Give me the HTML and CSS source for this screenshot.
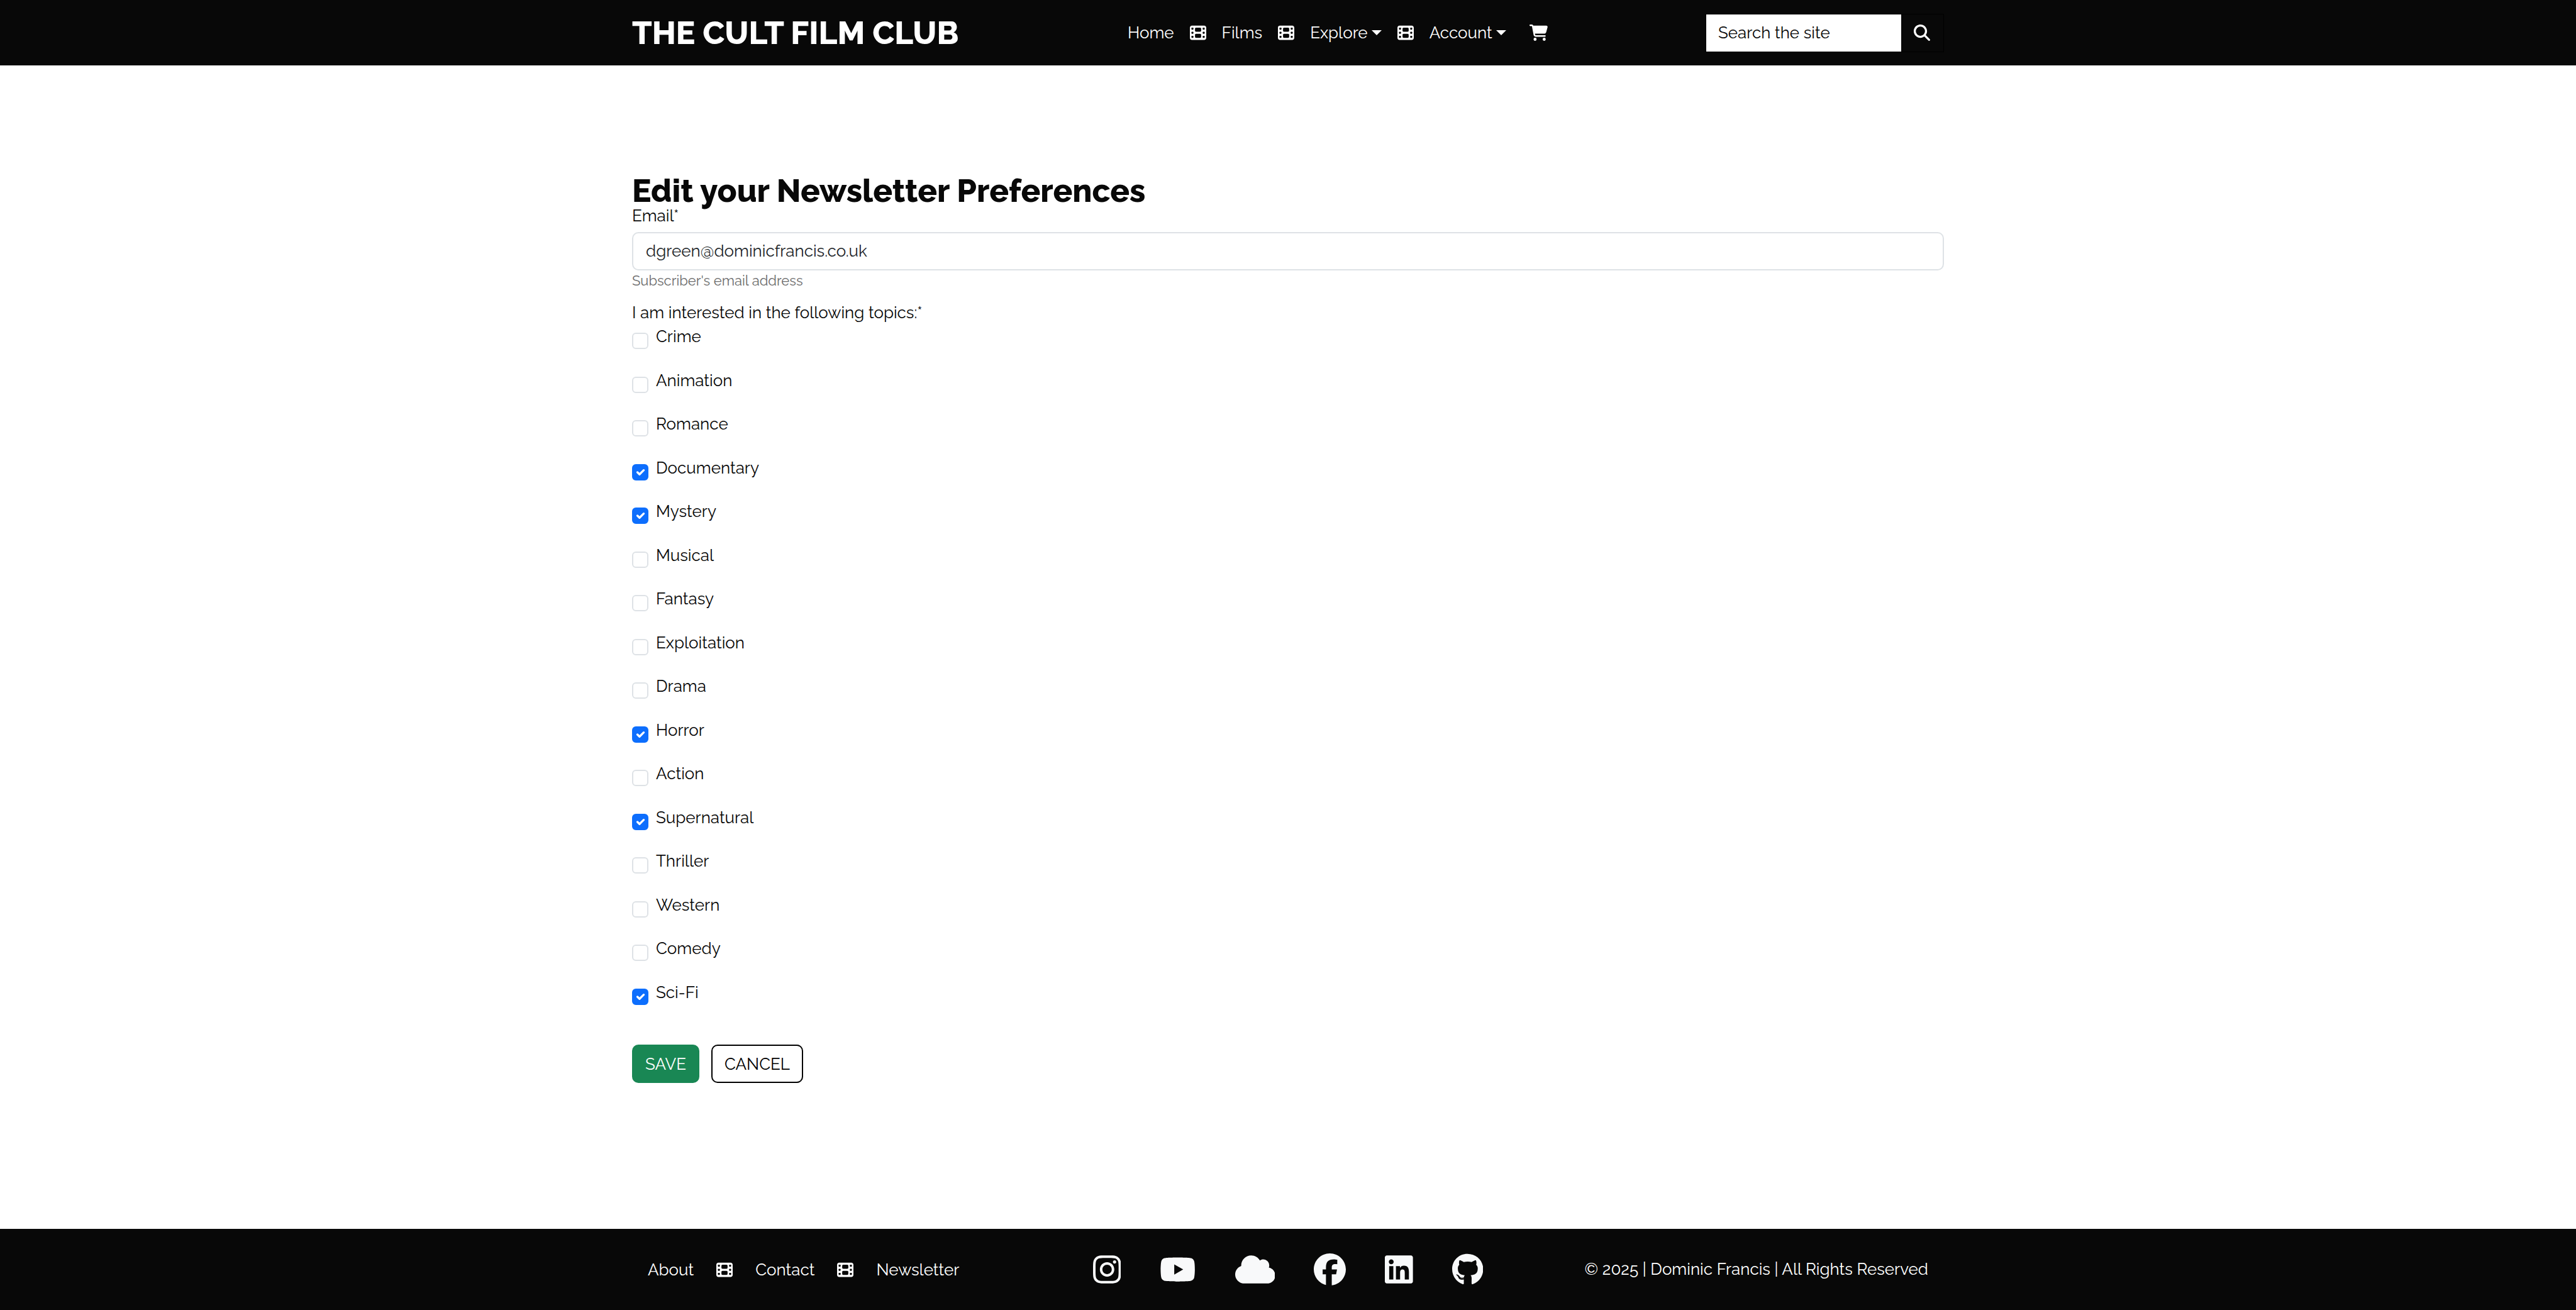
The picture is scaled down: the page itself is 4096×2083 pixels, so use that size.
FILE: index.html
```html
<!DOCTYPE html>
<html lang="en">
<head>
<meta charset="utf-8">
<meta name="viewport" content="width=device-width, initial-scale=1">
<title>The Cult Film Club</title>
<link rel="stylesheet" href="styles.css">
</head>
<body>
<svg class="sprite" aria-hidden="true">
  <symbol id="film" viewBox="0 0 512 512"><path d="M0 96C0 60.7 28.7 32 64 32l384 0c35.3 0 64 28.7 64 64l0 320c0 35.3-28.7 64-64 64L64 480c-35.3 0-64-28.7-64-64L0 96zM48 368l0 32c0 8.8 7.2 16 16 16l32 0c8.8 0 16-7.2 16-16l0-32c0-8.8-7.2-16-16-16l-32 0c-8.8 0-16 7.2-16 16zm368-16c-8.8 0-16 7.2-16 16l0 32c0 8.8 7.2 16 16 16l32 0c8.8 0 16-7.2 16-16l0-32c0-8.8-7.2-16-16-16l-32 0zM48 240l0 32c0 8.8 7.2 16 16 16l32 0c8.8 0 16-7.2 16-16l0-32c0-8.8-7.2-16-16-16l-32 0c-8.8 0-16 7.2-16 16zm368-16c-8.8 0-16 7.2-16 16l0 32c0 8.8 7.2 16 16 16l32 0c8.8 0 16-7.2 16-16l0-32c0-8.8-7.2-16-16-16l-32 0zM48 112l0 32c0 8.8 7.2 16 16 16l32 0c8.8 0 16-7.2 16-16l0-32c0-8.8-7.2-16-16-16L64 96c-8.8 0-16 7.2-16 16zM416 96c-8.8 0-16 7.2-16 16l0 32c0 8.8 7.2 16 16 16l32 0c8.8 0 16-7.2 16-16l0-32c0-8.8-7.2-16-16-16l-32 0zM160 128l0 64c0 17.7 14.3 32 32 32l128 0c17.7 0 32-14.3 32-32l0-64c0-17.7-14.3-32-32-32L192 96c-17.7 0-32 14.3-32 32zm32 160c-17.7 0-32 14.3-32 32l0 64c0 17.7 14.3 32 32 32l128 0c17.7 0 32-14.3 32-32l0-64c0-17.7-14.3-32-32-32l-128 0z"/></symbol>
</svg>

<header class="site-header">
  <div class="container header-row">
    <a class="brand" href="#">THE CULT FILM CLUB</a>
    <nav class="main-nav" aria-label="Main">
      <a class="nav-link" href="#">Home</a>
      <svg class="film" aria-hidden="true"><use href="#film"/></svg>
      <a class="nav-link" href="#">Films</a>
      <svg class="film" aria-hidden="true"><use href="#film"/></svg>
      <button class="nav-link dropdown" type="button">Explore</button>
      <svg class="film" aria-hidden="true"><use href="#film"/></svg>
      <button class="nav-link dropdown" type="button">Account</button>
      <a class="cart" href="#" aria-label="Basket"><svg class="cart-icon" viewBox="0 0 576 512"><path d="M0 24C0 10.7 10.7 0 24 0L69.5 0c22 0 41.5 12.8 50.6 32l411 0c26.3 0 45.5 25 38.6 50.4l-41 152.3c-8.5 31.4-37 53.3-69.5 53.3l-288.5 0 5.4 28.5c2.2 11.3 12.1 19.5 23.6 19.5L488 336c13.3 0 24 10.7 24 24s-10.7 24-24 24l-288.3 0c-34.6 0-64.3-24.6-70.7-58.5L77.4 54.5c-.7-3.8-4-6.5-7.9-6.5L24 48C10.7 48 0 37.3 0 24zM128 464a48 48 0 1 1 96 0 48 48 0 1 1 -96 0zm336-48a48 48 0 1 1 0 96 48 48 0 1 1 0-96z"/></svg></a>
    </nav>
    <form class="search">
      <input class="search-input" type="text" placeholder="Search the site" aria-label="Search the site">
      <button class="search-button" type="button" aria-label="Search"><svg class="search-icon" viewBox="0 0 512 512"><path d="M416 208c0 45.9-14.9 88.3-40 122.7L502.6 457.4c12.5 12.5 12.5 32.8 0 45.3s-32.8 12.5-45.3 0L330.7 376c-34.4 25.2-76.8 40-122.7 40C93.1 416 0 322.9 0 208S93.1 0 208 0S416 93.1 416 208zM208 352a144 144 0 1 0 0-288 144 144 0 1 0 0 288z"/></svg></button>
    </form>
  </div>
</header>

<main class="container content">
  <h1 class="title">Edit your Newsletter Preferences</h1>
  <form>
    <label class="label" for="email">Email*</label>
    <input class="text-input" id="email" type="email" value="dgreen@dominicfrancis.co.uk">
    <p class="help">Subscriber's email address</p>
    <fieldset class="topics">
      <legend class="label topics-label">I am interested in the following topics:*</legend>
      <div class="topic-list">
        <label class="topic"><input class="check" type="checkbox">Crime</label>
        <label class="topic"><input class="check" type="checkbox">Animation</label>
        <label class="topic"><input class="check" type="checkbox">Romance</label>
        <label class="topic"><input class="check" type="checkbox" checked>Documentary</label>
        <label class="topic"><input class="check" type="checkbox" checked>Mystery</label>
        <label class="topic"><input class="check" type="checkbox">Musical</label>
        <label class="topic"><input class="check" type="checkbox">Fantasy</label>
        <label class="topic"><input class="check" type="checkbox">Exploitation</label>
        <label class="topic"><input class="check" type="checkbox">Drama</label>
        <label class="topic"><input class="check" type="checkbox" checked>Horror</label>
        <label class="topic"><input class="check" type="checkbox">Action</label>
        <label class="topic"><input class="check" type="checkbox" checked>Supernatural</label>
        <label class="topic"><input class="check" type="checkbox">Thriller</label>
        <label class="topic"><input class="check" type="checkbox">Western</label>
        <label class="topic"><input class="check" type="checkbox">Comedy</label>
        <label class="topic"><input class="check" type="checkbox" checked>Sci-Fi</label>
      </div>
    </fieldset>
    <div class="actions">
      <button class="button save" type="button">SAVE</button>
      <button class="button cancel" type="button">CANCEL</button>
    </div>
  </form>
</main>

<footer class="site-footer">
  <div class="container footer-row">
    <nav class="footer-nav" aria-label="Footer">
      <a class="nav-link" href="#">About</a>
      <svg class="film" aria-hidden="true"><use href="#film"/></svg>
      <a class="nav-link" href="#">Contact</a>
      <svg class="film" aria-hidden="true"><use href="#film"/></svg>
      <a class="nav-link" href="#">Newsletter</a>
    </nav>
    <div class="social">
      <a class="social-link" href="#" aria-label="Instagram"><svg class="social-icon" viewBox="0 0 448 512"><path d="M224.1 141c-63.6 0-114.9 51.3-114.9 114.9s51.3 114.9 114.9 114.9S339 319.5 339 255.9 287.7 141 224.1 141zm0 189.6c-41.1 0-74.7-33.5-74.7-74.7s33.5-74.7 74.7-74.7 74.7 33.5 74.7 74.7-33.6 74.7-74.7 74.7zm146.4-194.3c0 14.9-12 26.8-26.8 26.8-14.9 0-26.8-12-26.8-26.8s12-26.8 26.8-26.8 26.8 12 26.8 26.8zm76.1 27.2c-1.7-35.9-9.9-67.7-36.2-93.9-26.2-26.2-58-34.4-93.9-36.2-37-2.1-147.9-2.1-184.9 0-35.8 1.7-67.6 9.9-93.9 36.1s-34.4 58-36.2 93.9c-2.1 37-2.1 147.9 0 184.9 1.7 35.9 9.9 67.7 36.2 93.9s58 34.4 93.9 36.2c37 2.1 147.9 2.1 184.9 0 35.9-1.7 67.7-9.9 93.9-36.2 26.2-26.2 34.4-58 36.2-93.9 2.1-37 2.1-147.8 0-184.8zM398.8 388c-7.8 19.6-22.9 34.7-42.6 42.6-29.5 11.7-99.5 9-132.1 9s-102.7 2.6-132.1-9c-19.6-7.8-34.7-22.9-42.6-42.6-11.7-29.5-9-99.5-9-132.1s-2.6-102.7 9-132.1c7.8-19.6 22.9-34.7 42.6-42.6 29.5-11.7 99.5-9 132.1-9s102.7-2.6 132.1 9c19.6 7.8 34.7 22.9 42.6 42.6 11.7 29.5 9 99.5 9 132.1s2.7 102.7-9 132.1z"/></svg></a>
      <a class="social-link" href="#" aria-label="YouTube"><svg class="social-icon" viewBox="0 0 576 512"><path d="M549.655 124.083c-6.281-23.65-24.787-42.276-48.284-48.597C458.781 64 288 64 288 64S117.22 64 74.629 75.486c-23.497 6.322-42.003 24.947-48.284 48.597-11.412 42.867-11.412 132.305-11.412 132.305s0 89.438 11.412 132.305c6.281 23.65 24.787 41.5 48.284 47.821C117.22 448 288 448 288 448s170.78 0 213.371-11.486c23.497-6.321 42.003-24.171 48.284-47.821 11.412-42.867 11.412-132.305 11.412-132.305s0-89.438-11.412-132.305zm-317.51 213.508V175.185l142.739 81.205-142.739 81.201z"/></svg></a>
      <a class="social-link" href="#" aria-label="Cloud"><svg class="social-icon" viewBox="0 0 640 512"><path d="M0 336c0 79.5 64.5 144 144 144l368 0c70.7 0 128-57.3 128-128c0-61.9-44-113.6-102.4-125.4c4.1-10.7 6.4-22.4 6.4-34.6c0-53-43-96-96-96c-19.7 0-38.1 6-53.3 16.2C367 64.2 315.3 32 256 32C167.6 32 96 103.6 96 192c0 2.7 .1 5.4 .2 8.1C40.2 219.8 0 273.2 0 336z"/></svg></a>
      <a class="social-link" href="#" aria-label="Facebook"><svg class="social-icon" viewBox="0 0 512 512"><path d="M512 256C512 114.6 397.4 0 256 0S0 114.6 0 256C0 376 82.7 476.8 194.2 504.5V334.2H141.4V256h52.8V222.3c0-87.1 39.4-127.5 125-127.5c16.2 0 44.2 3.2 55.7 6.4V172c-6-.6-16.5-1-29.6-1c-42 0-58.2 15.9-58.2 57.2V256h83.6l-14.4 78.2H287V510.1C413.8 494.8 512 386.9 512 256h0z"/></svg></a>
      <a class="social-link" href="#" aria-label="LinkedIn"><svg class="social-icon" viewBox="0 0 448 512"><path d="M416 32H31.9C14.3 32 0 46.5 0 64.3v383.4C0 465.5 14.3 480 31.9 480H416c17.6 0 32-14.5 32-32.3V64.3c0-17.8-14.4-32.3-32-32.3zM135.4 416H69V202.2h66.5V416zm-33.2-243c-21.3 0-38.5-17.3-38.5-38.5S80.9 96 102.2 96c21.2 0 38.5 17.3 38.5 38.5 0 21.3-17.2 38.5-38.5 38.5zm282.1 243h-66.4V312c0-24.8-.5-56.7-34.5-56.7-34.6 0-39.9 27-39.9 54.9V416h-66.4V202.2h63.7v29.2h.9c8.9-16.8 30.6-34.5 62.9-34.5 67.2 0 79.7 44.3 79.7 101.9V416z"/></svg></a>
      <a class="social-link" href="#" aria-label="GitHub"><svg class="social-icon" viewBox="0 0 496 512"><path d="M165.9 397.4c0 2-2.3 3.6-5.2 3.6-3.3.3-5.6-1.3-5.6-3.6 0-2 2.3-3.6 5.2-3.6 3-.3 5.6 1.3 5.6 3.6zm-31.1-4.5c-.7 2 1.3 4.3 4.3 4.9 2.6 1 5.6 0 6.2-2s-1.3-4.3-4.3-5.2c-2.6-.7-5.5.3-6.2 2.3zm44.2-1.7c-2.9.7-4.9 2.6-4.6 4.9.3 2 2.9 3.3 5.9 2.6 2.9-.7 4.9-2.6 4.6-4.6-.3-1.9-3-3.2-5.9-2.9zM244.8 8C106.1 8 0 113.3 0 252c0 110.9 69.8 205.8 169.5 239.2 12.8 2.3 17.3-5.6 17.3-12.1 0-6.2-.3-40.4-.3-61.4 0 0-70 15-84.7-29.8 0 0-11.4-29.1-27.8-36.6 0 0-22.9-15.7 1.6-15.4 0 0 24.9 2 38.6 25.8 21.9 38.6 58.6 27.5 72.9 20.9 2.3-16 8.8-27.1 16-33.7-55.9-6.2-112.3-14.3-112.3-110.5 0-27.5 7.6-41.3 23.6-58.9-2.6-6.5-11.1-33.3 2.6-67.9 20.9-6.5 69 27 69 27 20-5.6 41.5-8.5 62.8-8.5s42.8 2.9 62.8 8.5c0 0 48.1-33.6 69-27 13.7 34.7 5.2 61.4 2.6 67.9 16 17.7 25.8 31.5 25.8 58.9 0 96.5-58.9 104.2-114.8 110.5 9.2 7.9 17 22.9 17 46.4 0 33.7-.3 75.4-.3 83.6 0 6.5 4.6 14.4 17.3 12.1C428.2 457.8 496 362.9 496 252 496 113.3 383.5 8 244.8 8z"/></svg></a>
    </div>
    <p class="copyright">© 2025 | Dominic Francis | All Rights Reserved</p>
  </div>
</footer>
</body>
</html>
```
FILE: styles.css
```css
* {
  box-sizing: border-box;
}

body {
  margin: 0;
  min-height: 100vh;
  display: flex;
  flex-direction: column;
  background: #fff;
  color: #080808;
  font-family: Raleway, Lato, sans-serif;
  font-size: 26px;
  line-height: 28px;
}

a {
  color: inherit;
  text-decoration: none;
}

button,
input {
  font: inherit;
}

svg {
  display: block;
  fill: currentColor;
}

.sprite {
  display: none;
}

.container {
  width: 100%;
  max-width: 2124px;
  margin: 0 auto;
  padding: 0 19px;
}

/* Header */
.site-header {
  background: #080808;
  color: #fff;
}

.header-row {
  display: grid;
  grid-template-columns: 788px 1fr 379px;
  align-items: center;
  height: 104px;
}

.brand {
  font-size: 51px;
  font-weight: 800;
  line-height: 60px;
  white-space: nowrap;
}

.main-nav {
  display: flex;
  align-items: center;
  gap: 25px;
}

.nav-link {
  padding: 0;
  border: 0;
  background: none;
  color: inherit;
}

.dropdown {
  display: flex;
  align-items: center;
  gap: 6px;
}

.dropdown::after {
  content: "";
  border: 8px solid transparent;
  border-top-color: currentColor;
  border-bottom: 0;
}

.film {
  width: 26px;
  height: 26px;
}

.cart {
  margin-left: 12px;
}

.cart-icon {
  width: 29px;
  height: 26px;
}

.search {
  display: flex;
  height: 61px;
  border: 1px solid #000;
}

.search-input {
  flex: 1;
  min-width: 0;
  padding: 0 19px;
  border: 0;
  border-radius: 0;
  background: #fff;
  color: #080808;
}

.search-input::placeholder {
  color: #080808;
  opacity: 1;
}

.search-button {
  width: 67px;
  padding: 0 20px;
  border: 0;
  background: #080808;
  color: #fff;
}

.search-icon {
  width: 26px;
  height: 26px;
}

/* Preferences form */
.content {
  flex: 1;
  padding-top: 173px;
}

.title {
  margin: 0;
  font-size: 51px;
  font-weight: 800;
  line-height: 52px;
}

.label {
  display: block;
  padding: 0;
}

.text-input {
  display: block;
  width: 100%;
  height: 61px;
  margin-top: 12px;
  padding: 0 20px 2px;
  border: 2px solid #dee2e6;
  border-radius: 10px;
  background: #fff;
  color: #212529;
}

.help {
  margin: 2px 0 23px;
  color: #6c6c6c;
  font-size: 22px;
}

.topics {
  margin: 0;
  padding: 0;
  border: 0;
}

.topic-list {
  display: grid;
  grid-auto-rows: 1fr;
  justify-items: start;
  height: 1112px;
  margin-top: 10px;
}

.topic {
  display: flex;
  gap: 12px;
}

.check {
  appearance: none;
  flex: none;
  width: 26px;
  height: 26px;
  margin: 8px 0 0;
  border: 2px solid #dee2e6;
  border-radius: 6px;
  background: #fff center / 22px 22px no-repeat;
}

.check:checked {
  border-color: #0d6efd;
  background-color: #0d6efd;
  background-image: url("data:image/svg+xml,%3Csvg xmlns='http://www.w3.org/2000/svg' viewBox='0 0 20 20'%3E%3Cpath fill='none' stroke='%23fff' stroke-linecap='round' stroke-linejoin='round' stroke-width='3' d='m6 10 3 3 6-6'/%3E%3C/svg%3E");
}

.actions {
  display: flex;
  gap: 19px;
  margin-top: 28px;
}

.button {
  height: 61px;
  padding: 0 19px;
  border: 2px solid;
  border-radius: 10px;
}

.save {
  border-color: #198754;
  background: #198754;
  color: #fff;
}

.cancel {
  border-color: #000;
  background: #fff;
  color: #000;
}

/* Footer */
.site-footer {
  background: #080808;
  color: #fff;
}

.footer-row {
  display: grid;
  grid-template-columns: 1fr auto 1fr;
  align-items: center;
  height: 129px;
}

.footer-nav {
  display: flex;
  align-items: center;
  gap: 36px;
  padding-left: 25px;
}

.social {
  display: flex;
  gap: 62px;
  color: #f8f9fa;
}

.social-icon {
  width: auto;
  height: 51px;
}

.copyright {
  margin: 0;
  padding: 0 25px 2px 0;
  text-align: right;
}
```
